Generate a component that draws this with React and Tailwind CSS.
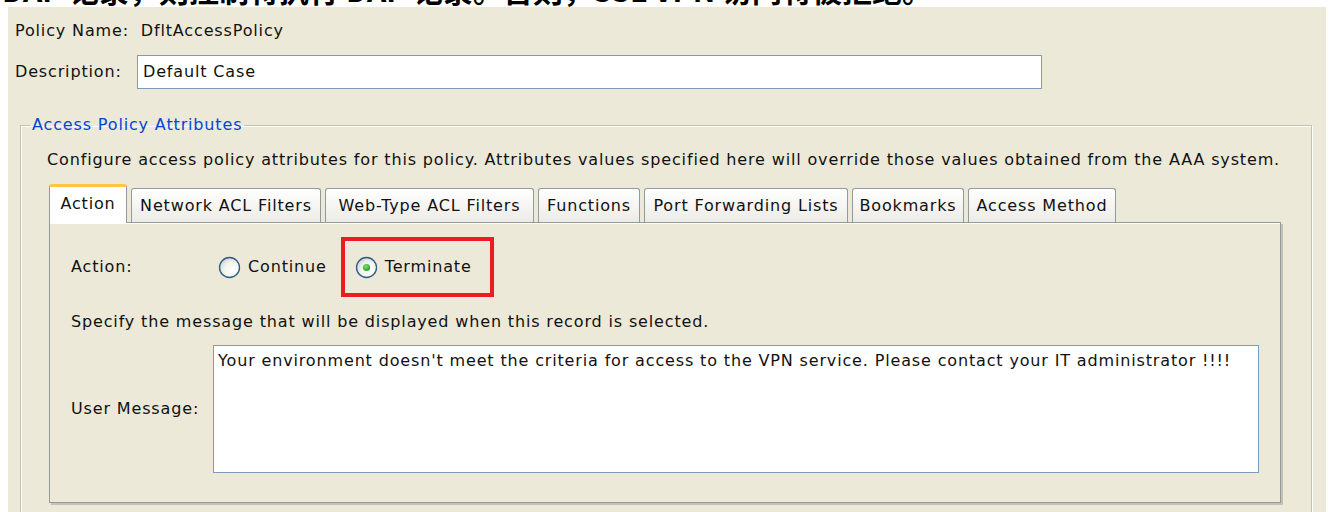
import { useState } from 'react';

const tabs = [
    { key: 'action', label: 'Action', width: 'w-[78px]' },
    { key: 'network', label: 'Network ACL Filters', width: 'w-[190px]' },
    { key: 'web', label: 'Web-Type ACL Filters', width: 'w-[209px]' },
    { key: 'functions', label: 'Functions', width: 'w-[102px]' },
    { key: 'port', label: 'Port Forwarding Lists', width: 'w-[204px]' },
    { key: 'bookmarks', label: 'Bookmarks', width: 'w-[112px]' },
    { key: 'method', label: 'Access Method', width: 'w-[148px]' },
];

function Radio({ checked }) {
    return (
        <svg width="23" height="23" viewBox="0 0 23 23" className="shrink-0">
            <defs>
                <radialGradient id={checked ? 'rgOn' : 'rgOff'} cx="0.65" cy="0.65" r="0.7">
                    <stop offset="0" stopColor="#ffffff" />
                    <stop offset="0.6" stopColor="#f3f3ef" />
                    <stop offset="1" stopColor="#d2d2ca" />
                </radialGradient>
                <radialGradient id="dot" cx="0.4" cy="0.35" r="0.7">
                    <stop offset="0" stopColor="#7fe07f" />
                    <stop offset="1" stopColor="#1d9a1d" />
                </radialGradient>
            </defs>
            <circle cx="11.5" cy="11.5" r="10" fill={`url(#${checked ? 'rgOn' : 'rgOff'})`} stroke="#2c5d86" strokeWidth="1.3" />
            {checked && <circle cx="11.5" cy="11.5" r="3.6" fill="url(#dot)" />}
        </svg>
    );
}

export default function App() {
    const [action, setAction] = useState('terminate');
    const [active, setActive] = useState('action');

    return (
        <div className="w-[1331px] h-[512px] bg-white overflow-hidden text-black font-['DejaVu_Sans',sans-serif]">
            {/* caption line above the dialog, cut by the frame */}
            <div className="h-[7px] overflow-hidden">
                <div className="-mt-[27px] ml-[2px] leading-[32px] text-[30px] font-bold whitespace-nowrap font-['Noto_Sans_CJK_SC',sans-serif]">
                    DAP 记录，则控制将执行 DAP 记录。否则，SSL VPN 访问将被拒绝。
                </div>
            </div>

            <div className="ml-[8px] mr-[5px] h-[505px] bg-[#ECE9D8] pl-[7px] pt-[14px] text-[16px] tracking-[0.85px] text-[#111]">
                <div className="h-[20px] leading-[20px]">Policy Name:&nbsp; DfltAccessPolicy</div>

                <div className="mt-[14px] flex items-center">
                    <span className="w-[122px]">Description:</span>
                    <div className="w-[905px] h-[34px] bg-white border border-[#7F9DB9] flex items-center px-[5px]">
                        Default Case
                    </div>
                </div>

                <fieldset className="mt-[26px] ml-[5px] mr-[15px] h-[400px] border border-[#c5c2b2] shadow-[inset_1px_1px_0_#fff,1px_1px_0_#fff] pl-[26px] pr-[30px]">
                    <legend className="-ml-[17px] px-[2px] text-[#0046D5] leading-[20px]">Access Policy Attributes</legend>

                    <div className="mt-[15px] leading-[20px] whitespace-nowrap">
                        Configure access policy attributes for this policy. Attributes values specified here will override those values obtained from the AAA system.
                    </div>

                    <div className="mt-[14px] ml-[2px] flex items-end gap-[4px] h-[38px]">
                        {tabs.map((t) => {
                            const on = t.key === active;
                            return (
                                <div
                                    key={t.key}
                                    onClick={() => setActive(t.key)}
                                    className={`${t.width} flex items-center justify-center rounded-t-[3px] border border-b-0 whitespace-nowrap ${
                                        on
                                            ? 'h-[39px] -mb-[1px] relative z-10 bg-white border-[#919B9C] border-t-[3px] border-t-[#FFC83C] pb-[2px]'
                                            : 'h-[34px] bg-gradient-to-b from-white to-[#ECEBE6] border-[#919B9C]'
                                    }`}
                                >
                                    {t.label}
                                </div>
                            );
                        })}
                    </div>

                    <div className="ml-[2px] h-[281px] border border-[#919B9C] shadow-[inset_0_1px_0_#fff,2px_2px_0_#c3c1b4] bg-[#ECE9D8] pl-[21px] pr-[21px] pt-[14px]">
                        <div className="flex items-center h-[60px]">
                            <span className="w-[147px]">Action:</span>
                            <label className="flex items-center gap-[7px] cursor-pointer" onClick={() => setAction('continue')}>
                                <Radio checked={action === 'continue'} />
                                <span>Continue</span>
                            </label>
                            <div className="ml-[14px] h-[60px] border-4 border-[#ED1C24] flex items-center pl-[10px] pr-[18px]">
                                <label className="flex items-center gap-[7px] cursor-pointer" onClick={() => setAction('terminate')}>
                                    <Radio checked={action === 'terminate'} />
                                    <span>Terminate</span>
                                </label>
                            </div>
                        </div>

                        <div className="mt-[15px] leading-[20px]">Specify the message that will be displayed when this record is selected.</div>

                        <div className="mt-[13px] flex items-center">
                            <span className="w-[142px]">User Message:</span>
                            <div className="w-[1046px] h-[128px] bg-white border border-[#7F9DB9] px-[4px] pt-[5px] leading-[20px]">
                                Your environment doesn't meet the criteria for access to the VPN service. Please contact your IT administrator !!!!
                            </div>
                        </div>
                    </div>
                </fieldset>
            </div>
        </div>
    );
}
